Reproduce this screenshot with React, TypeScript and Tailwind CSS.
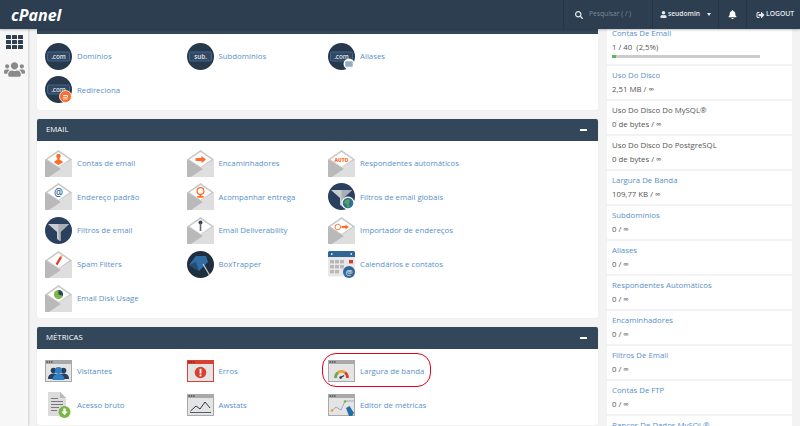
import React from 'react';
import { FaBell, FaSearch, FaSignOutAlt, FaUser, FaUsers } from 'react-icons/fa';

// Shared icon bases, all drawn on a 27x27 box
const Icon = ({ children }: { children: React.ReactNode }) => (
  <svg viewBox="0 0 27 27" className="h-[27px] w-[27px] shrink-0">
    {children}
  </svg>
);

const Envelope = ({ children }: { children?: React.ReactNode }) => (
  <Icon>
    <path d="M0 9.5 13.5 0 27 9.5V26a1 1 0 0 1-1 1H1a1 1 0 0 1-1-1Z" fill="#c8c8c8" />
    <path d="M2.5 9.5 13.5 2 24.5 9.5 13.500 17Z" fill="#ffffff" />
    <path d="M0 9.5 16 19 4 27H1a1 1 0 0 1-1-1Z" fill="#b9b9b9" />
    <path d="M27 9.5V26a1 1 0 0 1-1 1H4L16 19 13.5 17.5Z" fill="#dedede" />
    {children}
  </Icon>
);

const Globe = ({ label = '.com', badge }: { label?: string; badge?: React.ReactNode }) => (
  <Icon>
    <circle cx="13.5" cy="13.5" r="13.5" fill="#27394b" />
    <rect x="2.500" y="9" width="22" height="9" rx="1.5" fill="#34475f" stroke="#3d6da3" strokeWidth="0.9" />
    <text x="13.5" y="15.900" textAnchor="middle" fontSize="6.300" fontWeight="600" fill="#dfe4ea" fontFamily="Open Sans, sans-serif">
      {label}
    </text>
    {badge}
  </Icon>
);

const Funnel = ({ globe }: { globe?: boolean }) => (
  <Icon>
    <circle cx="13.5" cy="13.5" r="13.5" fill="#2b405f" />
    <path d="M3 7H24L15.5 15V24L12 22V15Z" fill="#c9cdd2" />
    <path d="M13.5 7H24L15.5 15V24L13.5 23Z" fill="#a9aeb5" />
    {globe && (
      <>
        <circle cx="20" cy="20" r="6.5" fill="#ffffff" />
        <circle cx="20" cy="20" r="5.3" fill="#2f6e9f" />
        <path d="M17 17.5 20.5 16 22 18 20.5 21 22 24 19.5 24.5 18.5 21 16 20Z" fill="#5da24a" />
      </>
    )}
  </Icon>
);

const Browser = ({ children, red }: { children?: React.ReactNode; red?: boolean }) => (
  <svg viewBox="0 0 27 22" className="h-[22px] w-[27px] shrink-0">
    <rect width="27" height="22" fill={red ? '#d8412f' : '#a9a9a9'} />
    <rect x="1" y="4" width="25" height="17" fill="#e4e4e4" />
    <g fill={red ? '#7b2017' : '#444444'}>
      <rect x="1.5" y="1.3" width="1.4" height="1.4" />
      <rect x="3.8" y="1.3" width="1.4" height="1.4" />
      <rect x="6.1" y="1.3" width="1.4" height="1.4" />
    </g>
    {children}
  </svg>
);

const ORANGE = '#ff6c2c';

const ICONS: Record<string, React.ReactNode> = {
  dominios: <Globe />,
  subdominios: <Globe label="sub." />,
  aliases: (
    <Globe
      badge={
        <>
          <circle cx="21" cy="21" r="5.5" fill="#ffffff" />
          <rect x="17.5" y="18.5" width="7" height="5" fill="#5b7fa6" />
          <path d="M18 20h6M18 22h6" stroke="#ffffff" strokeWidth="0.7" />
        </>
      }
    />
  ),
  redireciona: (
    <Globe
      badge={
        <>
          <circle cx="20.5" cy="20.5" r="6" fill="#ff6c2c" stroke="#ffffff" strokeWidth="0.8" />
          <path d="M18 19.5h4.5v1.8h-4.5M22.5 23h-4.5" fill="none" stroke="#ffffff" strokeWidth="0.9" />
        </>
      }
    />
  ),
  contas: (
    <Envelope>
      <circle cx="13.5" cy="6" r="2.3" fill={ORANGE} />
      <path d="M12.3 7.5h2.4v2.2l3 1.8v1L13.5 15 9.3 12.5v-1l3-1.8Z" fill={ORANGE} />
    </Envelope>
  ),
  encaminhadores: (
    <Envelope>
      <path d="M8.5 8h6V5.8l4.5 3.7-4.5 3.7v-2.2h-6Z" fill={ORANGE} />
    </Envelope>
  ),
  auto: (
    <Envelope>
      <text x="13.5" y="12" textAnchor="middle" fontSize="4.8" fontWeight="800" fill={ORANGE} fontFamily="Open Sans, sans-serif">
        AUTO
      </text>
    </Envelope>
  ),
  padrao: (
    <Envelope>
      <text x="13.5" y="13" textAnchor="middle" fontSize="10" fontWeight="600" fill="#2f6da3" fontFamily="Open Sans, sans-serif">
        @
      </text>
    </Envelope>
  ),
  entrega: (
    <Envelope>
      <circle cx="13.5" cy="8" r="3.4" fill="none" stroke={ORANGE} strokeWidth="1.3" />
      <path d="M12.5 11.5h2V13h2.2v1.8h-6.4V13h2.2Z" fill={ORANGE} />
    </Envelope>
  ),
  globais: <Funnel globe />,
  filtros: <Funnel />,
  deliverability: (
    <Envelope>
      <circle cx="13.5" cy="5.5" r="2" fill="#34404c" />
      <rect x="12.7" y="6.5" width="1.6" height="7.5" fill="#5f6b77" />
    </Envelope>
  ),
  importador: (
    <Envelope>
      <circle cx="9.8" cy="10" r="2.8" fill="none" stroke={ORANGE} strokeWidth="0.9" />
      <path d="M13.5 9h4V7.4l3.4 2.6-3.4 2.6V11h-4Z" fill={ORANGE} />
    </Envelope>
  ),
  spam: (
    <Envelope>
      <path d="M10.5 13 15 5.5l2 1.3-4.5 7.4Z" fill="#d8412f" />
      <path d="M15 5.5l2-1.5.3 2.6Z" fill="#e8a13c" />
    </Envelope>
  ),
  boxtrapper: (
    <Icon>
      <circle cx="13.5" cy="13.5" r="13.5" fill="#1f2f3f" />
      <path d="M2 14 9 5h10l2 6-9 9Z" fill="#2f6da3" />
      <path d="M2 14 9 11l3 9Z" fill="#234d78" />
      <path d="M16 13 22.5 24" stroke="#c5c9cd" strokeWidth="1.3" />
    </Icon>
  ),
  calendario: (
    <Icon>
      <rect width="27" height="25.5" rx="1.5" fill="#e8e8e8" />
      <path d="M0 6V1.5A1.5 1.5 0 0 1 1.5 0h24A1.5 1.5 0 0 1 27 1.5V6Z" fill="#2e6696" />
      <rect x="3" y="2.3" width="1.5" height="1.5" fill="#ffffff" />
      <rect x="22.5" y="2.3" width="1.5" height="1.5" fill="#ffffff" />
      <g fill="#b8b8b8">
        <rect x="2" y="9" width="4" height="3.4" />
        <rect x="7" y="9" width="4" height="3.4" />
        <rect x="12" y="9" width="4" height="3.4" />
        <rect x="2" y="14" width="4" height="3.4" />
        <rect x="7" y="14" width="4" height="3.4" />
        <rect x="12" y="14" width="4" height="3.4" />
        <rect x="2" y="19" width="4" height="3.4" />
        <rect x="7" y="19" width="4" height="3.4" />
      </g>
      <rect x="21" y="9" width="4" height="3.4" fill="#d8412f" />
      <circle cx="21" cy="21" r="6" fill="#2e6696" />
      <text x="21" y="24" textAnchor="middle" fontSize="8" fill="#ffffff" fontFamily="Open Sans, sans-serif">
        @
      </text>
    </Icon>
  ),
  diskusage: (
    <Envelope>
      <circle cx="13.5" cy="9.5" r="4.6" fill="#7ab648" />
      <path d="M13.5 9.5V4.9a4.6 4.6 0 0 1 4.4 5.9Z" fill="#2b405f" />
    </Envelope>
  ),
  visitantes: (
    <Browser>
      <circle cx="8.5" cy="10.5" r="2.8" fill="#26405f" />
      <path d="M3 19c0-4 2.500-5.500 5.500-5.500S14 15 14 19Z" fill="#26405f" />
      <circle cx="18.5" cy="10.5" r="2.8" fill="#26405f" />
      <path d="M13 19c0-4 2.500-5.500 5.500-5.500S24 15 24 19Z" fill="#26405f" />
      <circle cx="13.5" cy="10.5" r="3.4" fill="#2f7fc4" />
      <path d="M7.5 20c0-4.500 3-6 6-6s6 1.500 6 6Z" fill="#2f7fc4" />
    </Browser>
  ),
  erros: (
    <Browser red>
      <circle cx="13.5" cy="12.5" r="5.8" fill="#d8412f" />
      <rect x="12.6" y="8.8" width="1.8" height="4.8" fill="#ffffff" />
      <rect x="12.6" y="14.5" width="1.8" height="1.8" fill="#ffffff" />
    </Browser>
  ),
  largura: (
    <Browser>
      <path d="M7.500 18a6.500 6.500 0 0 1 2.500-5.500" fill="none" stroke="#6aa84f" strokeWidth="2.800" />
      <path d="M10 12.500a6.500 6.500 0 0 1 7 0" fill="none" stroke="#e8a13c" strokeWidth="2.800" />
      <path d="M17 12.500a6.500 6.500 0 0 1 2.500 5.500" fill="none" stroke="#d8412f" strokeWidth="2.800" />
      <path d="M12 18 16 15.500" stroke="#2b3b4c" strokeWidth="1.300" />
      <circle cx="12.7" cy="17.500" r="1.300" fill="#2b3b4c" />
    </Browser>
  ),
  bruto: (
    <Icon>
      <path d="M3 1H15L21 7V25H3Z" fill="#dcdcdc" />
      <path d="M15 1 21 7H15Z" fill="#b8b8b8" />
      <path d="M6 7.500h7M6 10.500h12M6 13.500h12M6 16.500h8M6 19.500h6" stroke="#77797c" strokeWidth="1" />
      <circle cx="19.500" cy="21" r="6" fill="#7ab648" />
      <path d="M18.300 17.500h2.400v3h2l-3.200 3.800-3.200-3.800h2Z" fill="#ffffff" />
    </Icon>
  ),
  awstats: (
    <Browser>
      <path d="M3 18.500h21" stroke="#2b3b4c" strokeWidth="0.8" />
      <path d="M3.500 17 9 12 13 15 18 8 23 14" fill="none" stroke="#2b3b4c" strokeWidth="1" />
    </Browser>
  ),
  editor: (
    <Browser>
      <path d="M3.500 17 8 13 13 16 17 7 26 7" fill="none" stroke="#8f9bb3" strokeWidth="0.8" />
      <circle cx="4" cy="16.500" r="1.300" fill="#e8a13c" />
      <circle cx="17" cy="7.500" r="1.300" fill="#7ab648" />
      <path d="M18 14 21.500 12 26 19 24 22H21Z" fill="#1f6ea5" />
    </Browser>
  ),
};

interface Tool {
  icon: string;
  label: string;
}

const DOMAINS: Tool[] = [
  { icon: 'dominios', label: 'Domínios' },
  { icon: 'subdominios', label: 'Subdomínios' },
  { icon: 'aliases', label: 'Aliases' },
  { icon: 'redireciona', label: 'Redireciona' },
];

const EMAIL: Tool[] = [
  { icon: 'contas', label: 'Contas de email' },
  { icon: 'encaminhadores', label: 'Encaminhadores' },
  { icon: 'auto', label: 'Respondentes automáticos' },
  { icon: 'padrao', label: 'Endereço padrão' },
  { icon: 'entrega', label: 'Acompanhar entrega' },
  { icon: 'globais', label: 'Filtros de email globais' },
  { icon: 'filtros', label: 'Filtros de email' },
  { icon: 'deliverability', label: 'Email Deliverability' },
  { icon: 'importador', label: 'Importador de endereços' },
  { icon: 'spam', label: 'Spam Filters' },
  { icon: 'boxtrapper', label: 'BoxTrapper' },
  { icon: 'calendario', label: 'Calendários e contatos' },
  { icon: 'diskusage', label: 'Email Disk Usage' },
];

const METRICS: Tool[] = [
  { icon: 'visitantes', label: 'Visitantes' },
  { icon: 'erros', label: 'Erros' },
  { icon: 'largura', label: 'Largura de banda' },
  { icon: 'bruto', label: 'Acesso bruto' },
  { icon: 'awstats', label: 'Awstats' },
  { icon: 'editor', label: 'Editor de métricas' },
];

const STATS = [
  { title: 'Uso Do Disco', value: '2,51 MB / ∞', link: true },
  { title: 'Uso Do Disco Do MySQL®', value: '0 de bytes / ∞' },
  { title: 'Uso Do Disco Do PostgreSQL', value: '0 de bytes / ∞' },
  { title: 'Largura De Banda', value: '109,77 KB / ∞', link: true },
  { title: 'Subdomínios', value: '0 / ∞', link: true },
  { title: 'Aliases', value: '0 / ∞', link: true },
  { title: 'Respondentes Automáticos', value: '0 / ∞', link: true },
  { title: 'Encaminhadores', value: '0 / ∞', link: true },
  { title: 'Filtros De Email', value: '0 / ∞', link: true },
  { title: 'Contas De FTP', value: '0 / ∞', link: true },
  { title: 'Bancos De Dados MySQL®', link: true },
];

const ToolGrid = ({ tools, className = '' }: { tools: Tool[]; className?: string }) => (
  <div className={`grid grid-cols-[repeat(3,141.5px)] gap-y-[6.75px] px-[8px] pt-[8.5px] ${className}`}>
    {tools.map((tool) => (
      <a key={tool.label} className="flex h-[27px] items-center gap-[5px] whitespace-nowrap text-[7.8px] text-[#5a8fc8]">
        <span className="flex w-[27px] justify-center">{ICONS[tool.icon]}</span>
        <span className="pt-[1.5px]">{tool.label}</span>
      </a>
    ))}
  </div>
);

const PanelHeading = ({ title }: { title: string }) => (
  <div className="flex h-[22px] items-center justify-between rounded-t-[2px] bg-[#33475a] pl-[9px] pr-[11px] text-[7.8px] text-white">
    {title}
    <span className="h-[2px] w-[7px] bg-white" />
  </div>
);

export default function App() {
  return (
    <div className="relative flex h-[426px] w-[800px] flex-col overflow-hidden bg-[#f3f3f3] font-['Open_Sans',sans-serif]">
      {/* Top bar */}
      <header className="relative z-10 flex h-[29px] shrink-0 items-center justify-between bg-[#2c3e50] shadow-[0_1px_2px_rgba(0,0,0,0.25)]">
        <span className="ml-[11px] text-[16px] font-bold italic leading-none text-white">cPanel</span>
        <div className="flex h-full items-center">
          <div className="flex h-full w-[89px] items-center gap-[6px] border-l border-[#263645] pl-[11px] text-[6.7px] text-[#7f8b97]">
            <FaSearch className="h-[8px] w-[8px] text-[#e6e9ec]" />
            Pesquisar ( / )
          </div>
          <div className="flex h-full w-[66px] items-center border-l border-[#263645] pl-[7px] text-[6.7px] font-semibold text-[#e6e9ec]">
            <FaUser className="mr-[1px] h-[7px] w-[7px]" />
            seudomin
            <span className="ml-[7px] h-0 w-0 border-x-[2.5px] border-t-[3px] border-x-transparent border-t-[#e6e9ec]" />
          </div>
          <div className="flex h-full w-[28px] items-center justify-center border-l border-[#263645]">
            <FaBell className="h-[9px] w-[9px] text-white" />
          </div>
          <div className="flex h-full w-[54px] items-center gap-[1px] border-l border-[#263645] pl-[9px] text-[6.8px] font-semibold text-[#e6e9ec]">
            <FaSignOutAlt className="h-[8px] w-[9px]" />
            LOGOUT
          </div>
        </div>
      </header>

      <div className="flex min-h-0 flex-1">
        {/* Sidebar */}
        <aside className="flex w-[28px] shrink-0 flex-col items-center bg-[#f7f7f7] pt-[6px] shadow-[1px_0_2px_rgba(0,0,0,0.15)]">
          <div className="grid grid-cols-3 gap-[1px]">
            {Array.from({ length: 9 }).map((_, i) => (
              <span key={i} className="h-[4px] w-[5px] rounded-[0.5px] bg-[#2f3f4f]" />
            ))}
          </div>
          <FaUsers className="mt-[12px] h-[17px] w-[21px] text-[#8a8a8a]" />
        </aside>

        {/* Tool panels */}
        <main className="ml-[9px] flex w-[561px] shrink-0 flex-col gap-[9px]">
          <section className="shrink-0 rounded-b-[2px] bg-white shadow-[0_0_1px_rgba(0,0,0,0.15)]">
            <div className="h-[5px] bg-[#33475a]" />
            <ToolGrid tools={DOMAINS} className="pb-[6.75px]" />
          </section>
          <section className="shrink-0 rounded-[2px] bg-white shadow-[0_0_1px_rgba(0,0,0,0.15)]">
            <PanelHeading title="EMAIL" />
            <ToolGrid tools={EMAIL} className="pb-[6.5px]" />
          </section>
          <section className="shrink-0 rounded-[2px] bg-white shadow-[0_0_1px_rgba(0,0,0,0.15)]">
            <PanelHeading title="MÉTRICAS" />
            <ToolGrid tools={METRICS} className="pb-[6.5px]" />
          </section>
        </main>

        {/* Stats column */}
        <div className="-mt-[5px] ml-[9px] flex w-[185px] shrink-0 flex-col gap-[2px] text-[7.8px] leading-[14px] text-[#555555]">
          <div className="h-[40px] shrink-0 bg-white px-[5px] pt-[2px]">
            <a className="block text-[#5a8fc8]">Contas De Email</a>
            <div>1 / 40 &nbsp;(2,5%)</div>
            <div className="mt-[1px] h-[3px] w-[148px] bg-[#cccccc]">
              <div className="h-full w-[4px] bg-[#5cb85c]" />
            </div>
          </div>
          {STATS.map((stat) => (
            <div key={stat.title} className="h-[33px] shrink-0 bg-white px-[5px] pt-[2px]">
              <div className={stat.link ? 'text-[#5a8fc8]' : ''}>{stat.title}</div>
              {stat.value && <div>{stat.value}</div>}
            </div>
          ))}
        </div>
      </div>

      {/* Red annotation around Largura de banda */}
      <div className="absolute left-[322px] top-[353px] h-[34px] w-[109px] rounded-[14px] border-[1.5px] border-[#e3001b]" />
    </div>
  );
}
